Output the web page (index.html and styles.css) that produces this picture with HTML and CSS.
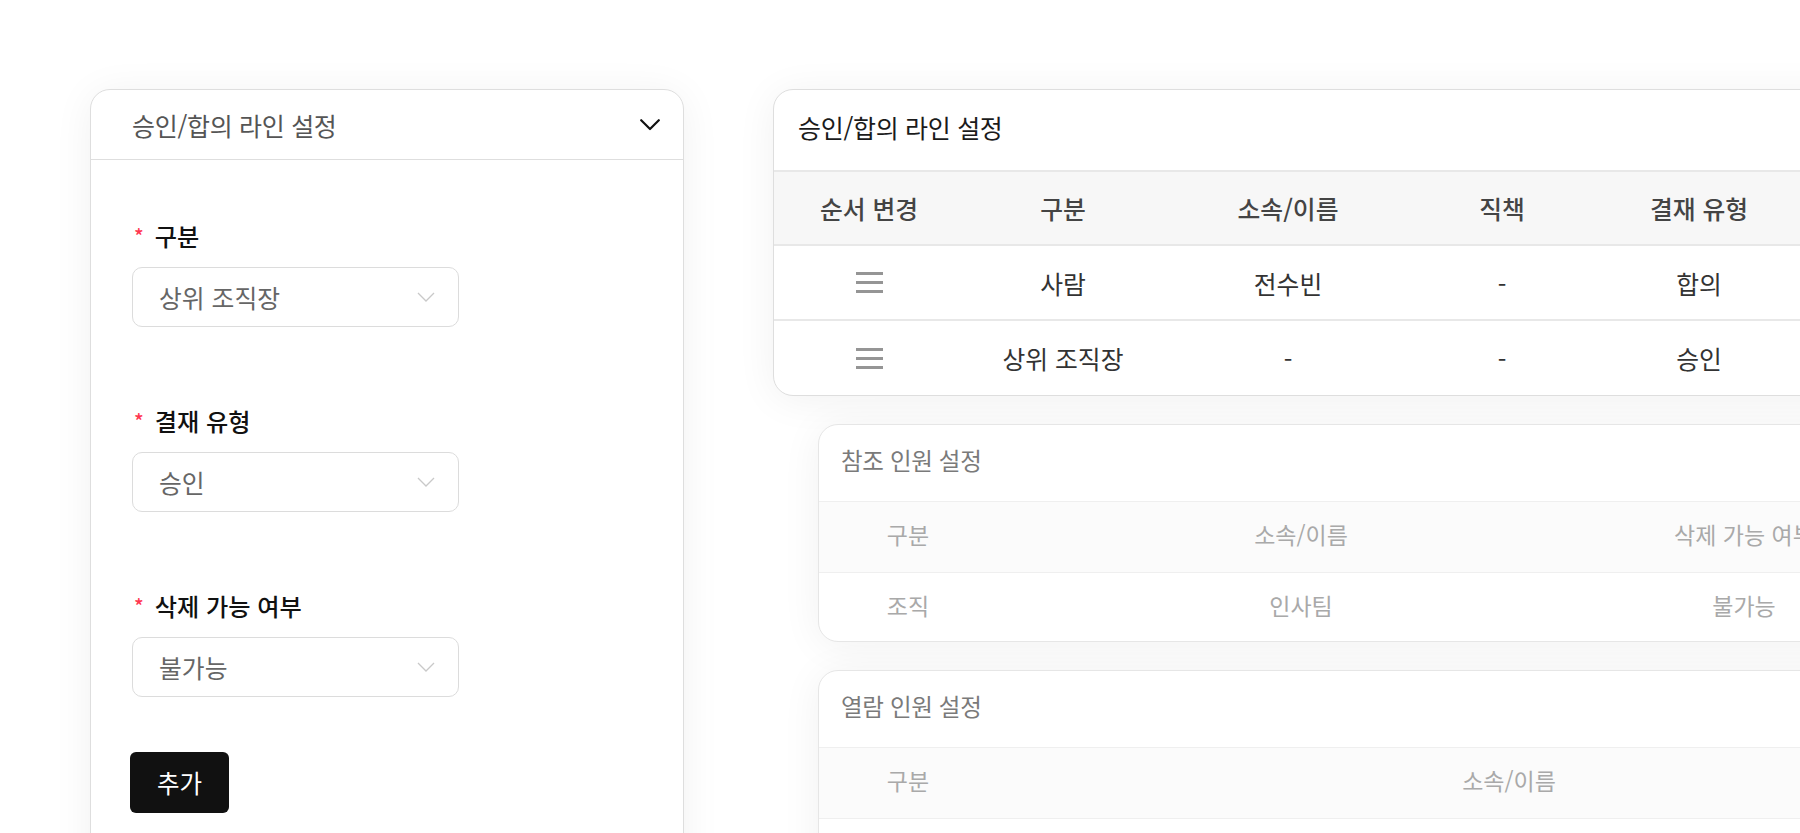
FILE: index.html
```html
<!DOCTYPE html>
<html lang="ko">
<head>
<meta charset="utf-8">
<title>승인/합의 라인 설정</title>
<link rel="stylesheet" href="styles.css">
</head>
<body>
<div class="page">
  <section class="panel form-panel">
    <header class="panel-head">
      <span class="panel-title">승인/합의 라인 설정</span>
      <svg class="head-chevron" width="20" height="12" viewBox="0 0 20 12"><path d="M1.2 1.2 L10 10 L18.8 1.2" fill="none" stroke="#111" stroke-width="2.2" stroke-linecap="round" stroke-linejoin="round"/></svg>
    </header>
    <div class="form-body">
      <div class="field">
        <div class="field-label"><span class="req">*</span>구분</div>
        <div class="select"><span class="select-value">상위 조직장</span><svg class="select-chevron" width="18" height="10" viewBox="0 0 18 10"><path d="M1 1 L9 9 L17 1" fill="none" stroke="#c9c9c9" stroke-width="1.3"/></svg></div>
      </div>
      <div class="field">
        <div class="field-label"><span class="req">*</span>결재 유형</div>
        <div class="select"><span class="select-value">승인</span><svg class="select-chevron" width="18" height="10" viewBox="0 0 18 10"><path d="M1 1 L9 9 L17 1" fill="none" stroke="#c9c9c9" stroke-width="1.3"/></svg></div>
      </div>
      <div class="field">
        <div class="field-label"><span class="req">*</span>삭제 가능 여부</div>
        <div class="select"><span class="select-value">불가능</span><svg class="select-chevron" width="18" height="10" viewBox="0 0 18 10"><path d="M1 1 L9 9 L17 1" fill="none" stroke="#c9c9c9" stroke-width="1.3"/></svg></div>
      </div>
      <button class="btn-add" type="button">추가</button>
    </div>
  </section>

  <div class="right-col">
    <section class="card card-main">
      <header class="card-head"><span class="card-title">승인/합의 라인 설정</span></header>
      <table class="grid grid-main">
        <colgroup>
          <col class="w190"><col class="w198"><col class="w252"><col class="w176"><col class="w218"><col class="w176"><col class="w190">
        </colgroup>
        <thead>
          <tr><th>순서 변경</th><th>구분</th><th>소속/이름</th><th>직책</th><th>결재 유형</th><th>삭제 가능 여부</th><th>삭제</th></tr>
        </thead>
        <tbody>
          <tr>
            <td><svg class="drag" width="27" height="21" viewBox="0 0 27 21"><path d="M0 1.5 H27 M0 10.5 H27 M0 19.5 H27" stroke="#959595" stroke-width="3"/></svg></td>
            <td>사람</td><td>전수빈</td><td>-</td><td>합의</td><td>가능</td><td></td>
          </tr>
          <tr>
            <td><svg class="drag" width="27" height="21" viewBox="0 0 27 21"><path d="M0 1.5 H27 M0 10.5 H27 M0 19.5 H27" stroke="#959595" stroke-width="3"/></svg></td>
            <td>상위 조직장</td><td>-</td><td>-</td><td>승인</td><td>불가능</td><td></td>
          </tr>
        </tbody>
      </table>
    </section>

    <section class="card card-sub card-ref">
      <header class="sub-head"><span class="sub-title">참조 인원 설정</span></header>
      <table class="grid grid-sub">
        <colgroup><col class="w178"><col class="w608"><col class="w278"><col class="w200"></colgroup>
        <thead><tr><th>구분</th><th>소속/이름</th><th>삭제 가능 여부</th><th>삭제</th></tr></thead>
        <tbody><tr><td>조직</td><td>인사팀</td><td>불가능</td><td></td></tr></tbody>
      </table>
    </section>

    <section class="card card-sub card-view">
      <header class="sub-head"><span class="sub-title">열람 인원 설정</span></header>
      <table class="grid grid-sub">
        <colgroup><col class="w178"><col class="w1024"><col class="w200"></colgroup>
        <thead><tr><th>구분</th><th>소속/이름</th><th>삭제</th></tr></thead>
        <tbody><tr><td>사람</td><td>전수빈</td><td></td></tr></tbody>
      </table>
    </section>
  </div>
</div>
</body>
</html>
```

FILE: styles.css
```css
html, body {
  margin: 0;
  padding: 0;
  background: #ffffff;
  overflow: hidden;
  width: 1800px;
  height: 833px;
}

body {
  font-family: "Noto Sans CJK KR", "Noto Sans", sans-serif;
  color: #222;
}

.page {
  display: flex;
  align-items: flex-start;
  gap: 89px;
  padding: 89px 0 0 90px;
  width: 3200px;
}

/* ---------- left form panel ---------- */
.panel {
  flex: 0 0 auto;
  width: 594px;
  height: 900px;
  background: #fff;
  border: 1px solid #dedede;
  border-radius: 20px;
  box-shadow: 0 4px 40px rgba(0, 0, 0, 0.06);
  box-sizing: border-box;
}

.panel-head {
  display: flex;
  align-items: center;
  justify-content: space-between;
  height: 69px;
  padding: 0 23px 0 41px;
  border-bottom: 1px solid #dedede;
}

.panel-title {
  font-size: 25px;
  color: #555;
  letter-spacing: -0.3px;
}

.head-chevron {
  display: block;
}

.form-body {
  padding: 60px 0 0 41px;
}

.field {
  margin-bottom: 78px;
}

.field:nth-child(3) {
  margin-bottom: 55px;
}

.field-label {
  display: flex;
  align-items: flex-start;
  font-size: 24.2px;
  line-height: 32px;
  color: #111;
  font-weight: 500;
}

.req {
  color: #ff3752;
  font-size: 20px;
  line-height: 20px;
  margin: 6px 11px 0 2px;
}

.select {
  display: flex;
  align-items: center;
  justify-content: space-between;
  width: 327px;
  height: 60px;
  margin-top: 15px;
  box-sizing: border-box;
  border: 1px solid #dcdcdc;
  border-radius: 10px;
  padding: 0 23px 0 26px;
}

.select-value {
  font-size: 24.8px;
  color: #666;
}

.select-chevron {
  display: block;
}

.btn-add {
  display: block;
  width: 99px;
  height: 61px;
  margin-left: -2px;
  background: #111;
  color: #fff;
  border: none;
  border-radius: 6px;
  font-family: inherit;
  font-size: 24.5px;
  cursor: pointer;
}

/* ---------- right column ---------- */
.right-col {
  flex: 0 0 auto;
  display: flex;
  flex-direction: column;
  align-items: flex-start;
  gap: 28px;
}

.card {
  background: #fff;
  border: 1px solid #dedede;
  border-radius: 20px;
  box-shadow: 0 4px 40px rgba(0, 0, 0, 0.06);
  overflow: hidden;
}

.card-main {
  width: 1400px;
}

.card-head {
  display: flex;
  align-items: center;
  height: 73px;
  padding: 0 0 7px 24px;
  border-bottom: 2px solid #e8e8e8;
}

.card-title {
  font-size: 25px;
  color: #1b1b1b;
  letter-spacing: -0.3px;
}

.grid {
  border-collapse: collapse;
  table-layout: fixed;
  width: 100%;
}

.grid th,
.grid td {
  text-align: center;
  padding: 0;
}

.grid-main th {
  height: 72px;
  background: #f7f7f7;
  font-size: 24.8px;
  font-weight: 500;
  color: #444;
  border-bottom: 2px solid #e8e8e8;
}

.grid-main td {
  height: 73px;
  font-size: 24.8px;
  color: #333;
  border-bottom: 2px solid #e8e8e8;
}

.grid-main tbody tr:last-child td {
  border-bottom: none;
  height: 74px;
}

.drag {
  display: block;
  margin: 0 auto;
}

.w178 { width: 178px; }
.w176 { width: 176px; }
.w190 { width: 190px; }
.w198 { width: 198px; }
.w200 { width: 200px; }
.w218 { width: 218px; }
.w252 { width: 252px; }
.w278 { width: 278px; }
.w608 { width: 608px; }
.w1024 { width: 1024px; }

/* ---------- faded sub cards ---------- */
.card-sub {
  margin-left: 45px;
  border-color: #e6e6e6;
}

.card-ref {
  width: 1264px;
}

.card-view {
  width: 1402px;
}

.sub-head {
  display: flex;
  align-items: center;
  height: 69px;
  padding: 0 0 7px 22px;
  border-bottom: 1px solid #efefef;
}

.sub-title {
  font-size: 23.5px;
  color: #7a7a7a;
  letter-spacing: -0.3px;
}

.grid-sub th {
  height: 70px;
  box-sizing: border-box;
  padding-bottom: 5px;
  background: #fbfbfb;
  font-size: 23px;
  font-weight: 400;
  color: #a9a9a9;
  border-bottom: 1px solid #efefef;
}

.grid-sub td {
  height: 69px;
  box-sizing: border-box;
  padding-bottom: 4px;
  font-size: 23px;
  color: #a9a9a9;
}
```
